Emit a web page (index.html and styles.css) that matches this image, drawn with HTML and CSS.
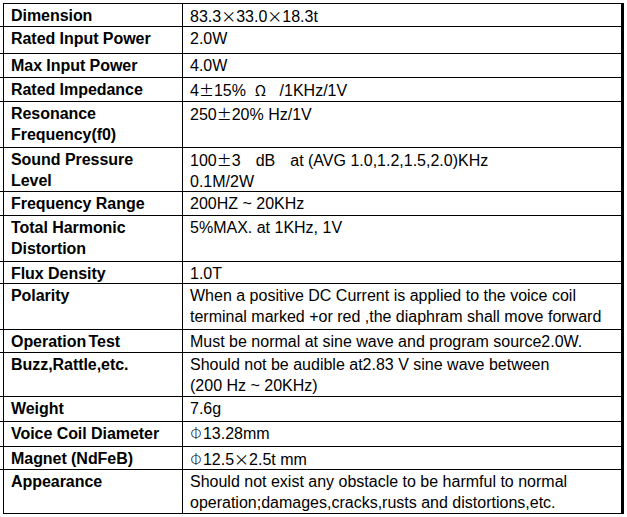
FILE: index.html
```html
<!DOCTYPE html>
<html lang="en">
<head>
<meta charset="utf-8">
<title>Speaker Specification</title>
<link rel="stylesheet" href="styles.css">
</head>
<body>
<div class="spec">
  <div class="label">Dimension</div>
  <div class="value">83.3<span class="cjk">×</span>33.0<span class="cjk">×</span>18.3t</div>

  <div class="label">Rated Input Power</div>
  <div class="value">2.0W</div>

  <div class="label">Max Input Power</div>
  <div class="value">4.0W</div>

  <div class="label">Rated Impedance</div>
  <div class="value">4<span class="cjk">±</span>15%&nbsp; <span class="cjk">Ω</span>&nbsp;&nbsp; /1KHz/1V</div>

  <div class="label">Resonance<br>Frequency(f0)</div>
  <div class="value">250<span class="cjk">±</span>20% Hz/1V</div>

  <div class="label">Sound Pressure<br>Level</div>
  <div class="value">100<span class="cjk">±</span>3<span class="cjk">　</span>dB<span class="cjk">　</span>at (AVG 1.0,1.2,1.5,2.0)KHz<br>0.1M/2W</div>

  <div class="label">Frequency Range</div>
  <div class="value">200HZ ~ 20KHz</div>

  <div class="label">Total Harmonic<br>Distortion</div>
  <div class="value">5%MAX. at 1KHz, 1V</div>

  <div class="label">Flux Density</div>
  <div class="value">1.0T</div>

  <div class="label">Polarity</div>
  <div class="value">When a positive DC Current is applied to the voice coil<br>terminal marked +or red ,the diaphram shall move forward</div>

  <div class="label tight">Operation Test</div>
  <div class="value">Must be normal at sine wave and program source2.0W.</div>

  <div class="label">Buzz,Rattle,etc.</div>
  <div class="value">Should not be audible at2.83 V sine wave between<br>(200 Hz ~ 20KHz)</div>

  <div class="label">Weight</div>
  <div class="value">7.6g</div>

  <div class="label">Voice Coil Diameter</div>
  <div class="value"><span class="phi">Φ</span>13.28mm</div>

  <div class="label">Magnet (NdFeB)</div>
  <div class="value"><span class="phi">Φ</span>12.5<span class="cjk">×</span>2.5t mm</div>

  <div class="label last">Appearance</div>
  <div class="value">Should not exist any obstacle to be harmful to normal<br>operation;damages,cracks,rusts and distortions,etc.</div>
</div>
</body>
</html>
```

FILE: styles.css
```css
html, body {
  margin: 0;
  padding: 0;
  background: #ffffff;
}

body {
  font-family: "Liberation Sans", Arial, sans-serif;
  font-size: 16px;
  color: #000000;
}

.spec {
  display: grid;
  grid-template-columns: 179px 441px;
  grid-template-rows: 23px 27px 24px 24px 46px 44px 24px 46px 22px 46px 23px 44px 25px 25px 23px 44px;
  width: max-content;
  margin: 3px 0 0 3px;
  border-top: 1px solid #000;
  border-left: 1px solid #000;
}

.label,
.value {
  box-sizing: border-box;
  border-bottom: 1px solid #000;
  padding: 1px 0 0 7px;
  line-height: 21px;
  white-space: nowrap;
}

.label {
  position: relative;
  font-weight: bold;
  letter-spacing: -0.05px;
  border-right: 1px solid #000;
}

.label::before {
  content: "";
  position: absolute;
  left: -4px;
  bottom: -1px;
  width: 3px;
  height: 1px;
  background: #000;
}

.label.last::before {
  display: none;
}

.label.tight {
  word-spacing: -2px;
}

.value {
  border-right: 3px solid #000;
}

.cjk {
  font-family: "Noto Sans CJK SC", sans-serif;
  font-size: 15px;
}

.phi {
  font-family: "DejaVu Sans", sans-serif;
  font-size: 15px;
  font-weight: 200;
}
```
